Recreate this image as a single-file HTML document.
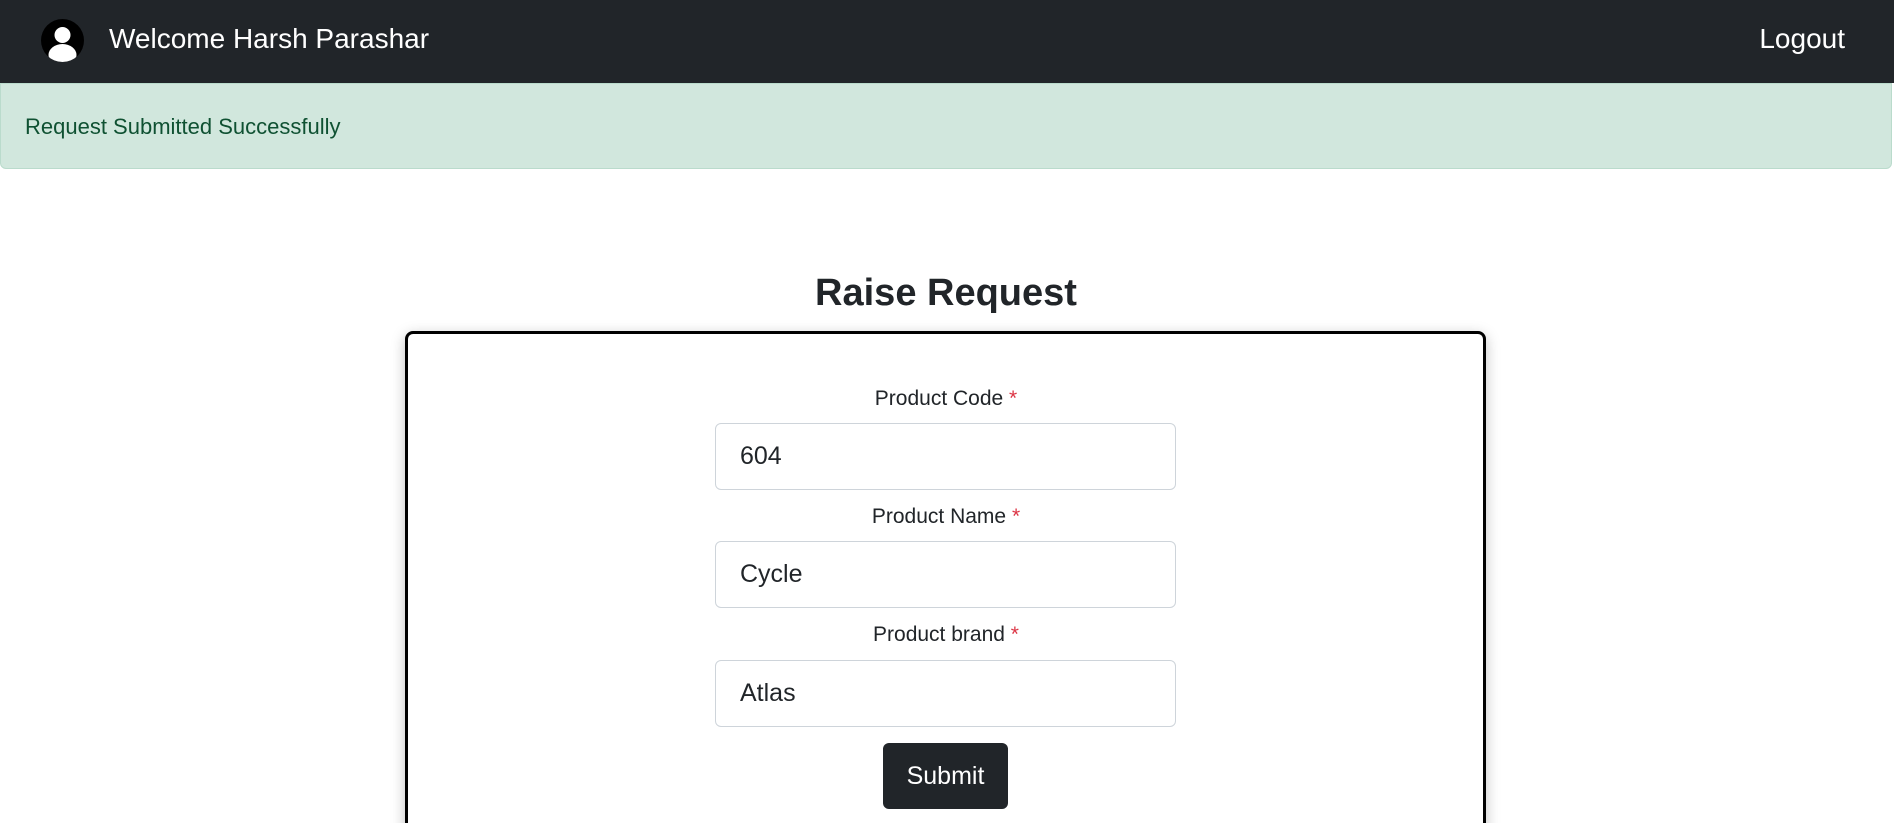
<!DOCTYPE html>
<html style="overflow:hidden;height:823px"><head><meta charset="utf-8"><style>
*{box-sizing:border-box;margin:0;padding:0}
body{width:1894px;height:823px;overflow:hidden;background:#fff;font-family:"Liberation Sans",sans-serif;color:#212529}
.wrap{position:relative;width:1894px;height:823px;overflow:hidden}
.nav{position:absolute;left:0;top:0;width:1894px;height:83px;background:#212529;color:#fff}
.icon{position:absolute;left:41px;top:19px;width:43px;height:43px;border-radius:50%;background:#000;overflow:hidden}
.welcome{position:absolute;left:109px;top:20px;font-size:28px;line-height:38px}
.logout{position:absolute;right:49px;top:20px;font-size:28px;line-height:38px}
.alert{position:absolute;left:0;top:83px;width:1892px;height:86px;background:#d1e7dd;border:1px solid #badbcc;border-radius:0 0 6px 6px;color:#0f5132;font-size:22px;padding-left:24px;line-height:86px}
h1{position:absolute;left:0;width:1892px;top:267px;text-align:center;font-size:38px;font-weight:bold;line-height:52px}
.card{position:absolute;left:405px;top:331px;width:1081px;height:520px;border:3px solid #000;border-radius:8px;box-shadow:0 4px 14px rgba(0,0,0,.25)}
.lbl{position:absolute;left:0;width:1892px;text-align:center;font-size:21px;line-height:28px}
.lbl span{color:#dc3545}
.inp{position:absolute;left:715px;width:461px;height:67px;border:1px solid #ced4da;border-radius:6px;font-size:25px;padding-left:24px;line-height:65px;color:#212529}
.btn{position:absolute;left:883px;top:743px;width:125px;height:66px;background:#212529;color:#fff;border-radius:6px;font-size:25px;text-align:center;line-height:66px}
</style></head><body><div class="wrap">
<div class="nav">
<div class="icon"><svg width="43" height="43" viewBox="0 0 43 43"><circle cx="21.5" cy="16" r="8" fill="#fff"/><ellipse cx="21.5" cy="36" rx="14" ry="11" fill="#fff"/></svg></div>
<div class="welcome">Welcome Harsh Parashar</div>
<div class="logout">Logout</div>
</div>
<div class="alert">Request Submitted Successfully</div>
<h1>Raise Request</h1>
<div class="card"></div>
<div class="lbl" style="top:385px">Product Code <span>*</span></div>
<div class="inp" style="top:423px">604</div>
<div class="lbl" style="top:503px">Product Name <span>*</span></div>
<div class="inp" style="top:541px">Cycle</div>
<div class="lbl" style="top:621px">Product brand <span>*</span></div>
<div class="inp" style="top:660px">Atlas</div>
<div class="btn">Submit</div>
</div></body></html>
